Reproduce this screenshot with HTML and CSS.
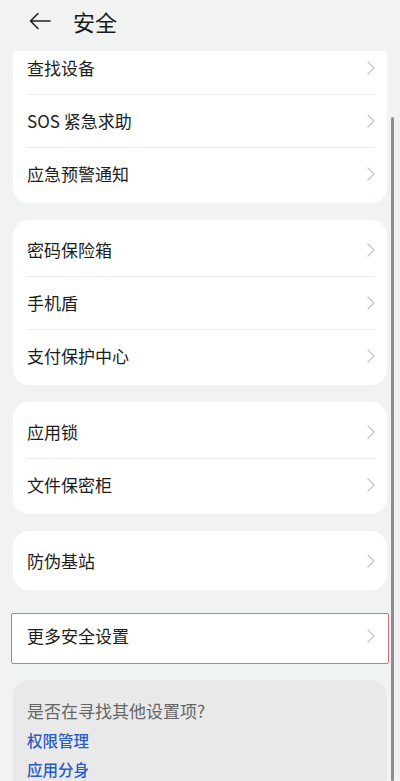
FILE: index.html
```html
<!DOCTYPE html>
<html lang="zh-CN">

<head>
    <meta charset="UTF-8">
    <meta name="viewport" content="width=device-width, initial-scale=1.0">
    <title>安全</title>
    <link rel="stylesheet" href="styles.css">
</head>

<body>
    <div class="screen">
        <div class="header">
            <svg class="back" width="22" height="18" viewBox="0 0 22 18">
                <path d="M21 9H2M9 1.5L1.5 9L9 16.5" fill="none" stroke="#222" stroke-width="1.6" stroke-linecap="round" stroke-linejoin="round"/>
            </svg>
            <span class="title">安全</span>
        </div>

        <div class="list">
            <div class="card first">
                <div class="row">查找设备<span class="chev"></span></div>
                <div class="row">SOS 紧急求助<span class="chev"></span></div>
                <div class="row">应急预警通知<span class="chev"></span></div>
            </div>

            <div class="card">
                <div class="row">密码保险箱<span class="chev"></span></div>
                <div class="row">手机盾<span class="chev"></span></div>
                <div class="row">支付保护中心<span class="chev"></span></div>
            </div>

            <div class="card">
                <div class="row">应用锁<span class="chev"></span></div>
                <div class="row">文件保密柜<span class="chev"></span></div>
            </div>

            <div class="card">
                <div class="row">防伪基站<span class="chev"></span></div>
            </div>

            <div class="card marked">
                <div class="row">更多安全设置<span class="chev"></span></div>
            </div>

            <div class="suggest">
                <div class="ask">是否在寻找其他设置项?</div>
                <a class="link">权限管理</a>
                <a class="link">应用分身</a>
            </div>
        </div>

        <div class="scrollbar"></div>
    </div>

    <script>
        // draw the same thin chevron in every row
        document.querySelectorAll('.chev').forEach(el => {
            el.innerHTML = '<svg width="8" height="14" viewBox="0 0 8 14"><path d="M1 1L7 7L1 13" fill="none" stroke="#c6c6c6" stroke-width="1.4" stroke-linecap="round" stroke-linejoin="round"/></svg>';
        });
    </script>
</body>

</html>
```

FILE: styles.css
```css
html,
body {
    margin: 0;
    padding: 0;
}

body {
    font-family: "Noto Sans CJK SC", "Noto Sans", sans-serif;
    background-color: #f1f2f2;
    color: #1c1c1c;
}

.screen {
    position: relative;
    width: 400px;
    height: 781px;
    overflow: hidden;
}

.header {
    position: relative;
    z-index: 1;
    height: 51px;
    display: flex;
    align-items: center;
    padding-left: 29px;
    padding-bottom: 9px;
    box-sizing: border-box;
    background-color: #f1f2f2;
}

.back {
    display: block;
}

.title {
    margin-left: 22px;
    font-size: 22px;
    font-weight: 400;
    color: #1a1a1a;
}

.list {
    padding: 0 13px 0 13px;
    width: 374px;
    box-sizing: content-box;
    display: flex;
    flex-direction: column;
    gap: 17px;
}

.card {
    background-color: #fff;
    border-radius: 16px;
    padding: 3px 0;
}

.card.first {
    margin-top: -13px;
}

.row {
    height: 53px;
    display: flex;
    align-items: center;
    justify-content: space-between;
    margin: 0 0 0 14px;
    padding-right: 12px;
    font-size: 17px;
    position: relative;
}

.row + .row::before {
    content: "";
    position: absolute;
    top: 0;
    left: 0;
    right: 12px;
    border-top: 1px solid #ececec;
}

.chev {
    display: flex;
    align-items: center;
}

.card.marked {
    margin: 6px -2px 0 -2px;
    border: 1.5px solid #d9707b;
    border-radius: 2px;
    padding: 0;
}

.card.marked .row {
    height: 49px;
    margin-left: 15px;
    padding-right: 13px;
    padding-bottom: 6px;
    box-sizing: border-box;
}

.suggest {
    margin-top: -1px;
    background-color: #e9e9e9;
    border-radius: 16px;
    padding: 17px 14px 20px 14px;
    display: flex;
    flex-direction: column;
    align-items: flex-start;
}

.ask {
    font-size: 17px;
    color: #666;
    line-height: 28px;
    margin-bottom: 1px;
}

.link {
    font-size: 15.5px;
    font-weight: 500;
    color: #2a5bc2;
    line-height: 29px;
}

.scrollbar {
    position: absolute;
    left: 391px;
    top: 117px;
    width: 3px;
    bottom: 0;
    background-color: #8e8e8e;
    border-radius: 2px;
}
```
